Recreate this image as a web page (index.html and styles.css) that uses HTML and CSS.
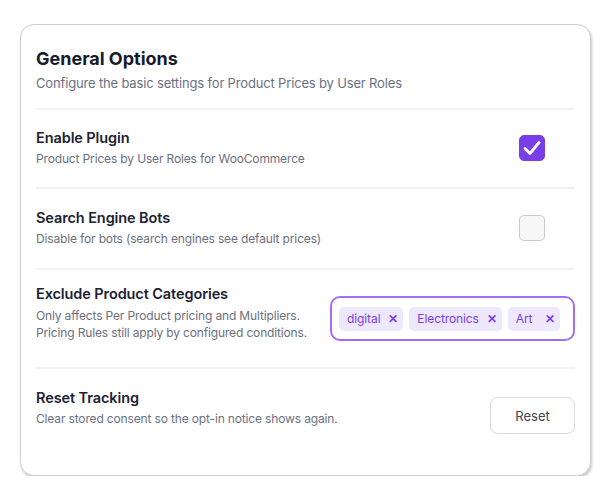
FILE: index.html
```html
<!DOCTYPE html>
<html>
<head>
<meta charset="utf-8">
<link rel="stylesheet" href="styles.css">
</head>
<body>
<div class="card">
  <div class="header">
    <h1 class="title">General Options</h1>
    <p class="subtitle">Configure the basic settings for Product Prices by User Roles</p>
  </div>
  <div class="row">
    <div class="text">
      <div class="label">Enable Plugin</div>
      <div class="desc">Product Prices by User Roles for WooCommerce</div>
    </div>
    <span class="check checked">
      <svg width="22" height="22" viewBox="0 0 22 22"><polyline points="4,11.5 9,16.5 18,5.5" fill="none" stroke="#fff" stroke-width="2.8" stroke-linecap="round" stroke-linejoin="round"/></svg>
    </span>
  </div>
  <div class="row row-second">
    <div class="text">
      <div class="label">Search Engine Bots</div>
      <div class="desc">Disable for bots (search engines see default prices)</div>
    </div>
    <span class="check"></span>
  </div>
  <div class="row row-tags">
    <div class="text">
      <div class="label">Exclude Product Categories</div>
      <div class="desc multi">Only affects Per Product pricing and Multipliers.<br>Pricing Rules still apply by configured conditions.</div>
    </div>
    <div class="tagbox">
      <span class="tag">digital<span class="x">✕</span></span>
      <span class="tag">Electronics<span class="x">✕</span></span>
      <span class="tag">Art<span class="x">✕</span></span>
    </div>
  </div>
  <div class="row row-last">
    <div class="text">
      <div class="label">Reset Tracking</div>
      <div class="desc">Clear stored consent so the opt-in notice shows again.</div>
    </div>
    <button class="btn">Reset</button>
  </div>
</div>
</body>
</html>
```

FILE: styles.css
```css
* { box-sizing: border-box; }
body {
  margin: 0;
  background: #fff;
  font-family: Inter, "Noto Sans", sans-serif;
  color: #1c2233;
}
.card {
  margin: 24px 0 0 20px;
  width: 571px;
  height: 452px;
  border: 1px solid #cfcfd3;
  border-radius: 14px;
  box-shadow: 1px 2px 3px rgba(0,0,0,0.22);
  padding: 0 15px 0 15px;
  background: #fff;
}
.header {
  padding-top: 22px;
  padding-bottom: 16px;
  border-bottom: 2px solid #f1f1f3;
}
.title {
  margin: 0;
  font-size: 18px;
  line-height: 24px;
  font-weight: 700;
  color: #151a2d;
}
.subtitle {
  margin: 3px 0 0;
  font-size: 13px;
  line-height: 18px;
  letter-spacing: -0.16px;
  color: #6b7080;
}
.row {
  display: flex;
  align-items: center;
  justify-content: space-between;
  padding: 18px 0 19px;
  border-bottom: 2px solid #f1f1f3;
}
.row-second {
  padding: 19px 0 20px;
}
.label {
  font-size: 14.5px;
  line-height: 20px;
  font-weight: 600;
  letter-spacing: -0.1px;
  color: #1c2233;
}
.desc {
  font-size: 12px;
  line-height: 18px;
  letter-spacing: -0.15px;
  color: #6b7080;
  margin-top: 2px;
}
.desc.multi { line-height: 17px; margin-top: 3px; }
.check {
  width: 26px;
  height: 26px;
  border-radius: 5px;
  border: 1px solid #c8c8cc;
  background: #f7f7f8;
  margin-right: 30px;
  display: flex;
  align-items: center;
  justify-content: center;
}
.check.checked {
  background: #7a3ee8;
  border-color: #7a3ee8;
}
.row-tags {
  align-items: flex-start;
  padding: 14px 0 26px;
}
.tagbox {
  margin-top: 12px;
  width: 245px;
  height: 45px;
  border: 2px solid #a36ef6;
  border-radius: 10px;
  display: flex;
  align-items: center;
  gap: 6px;
  padding: 0 7px;
}
.tag {
  background: #ede8fd;
  color: #7a3ee8;
  border-radius: 5px;
  height: 24px;
  min-width: 52px;
  display: flex;
  align-items: center;
  justify-content: space-between;
  padding: 0 5px 0 8px;
  font-size: 12px;
  letter-spacing: -0.1px;
  gap: 8px;
}
.tag .x {
  font-size: 11.5px;
  font-weight: 700;
}
.row-last {
  border-bottom: none;
  align-items: flex-start;
  padding-top: 19px;
}
.btn {
  margin-top: 9px;
  width: 85px;
  height: 37px;
  border: 1px solid #d9d9de;
  border-radius: 8px;
  background: #fff;
  font-family: Inter, "Noto Sans", sans-serif;
  font-size: 13px;
  color: #40444f;
}
```
